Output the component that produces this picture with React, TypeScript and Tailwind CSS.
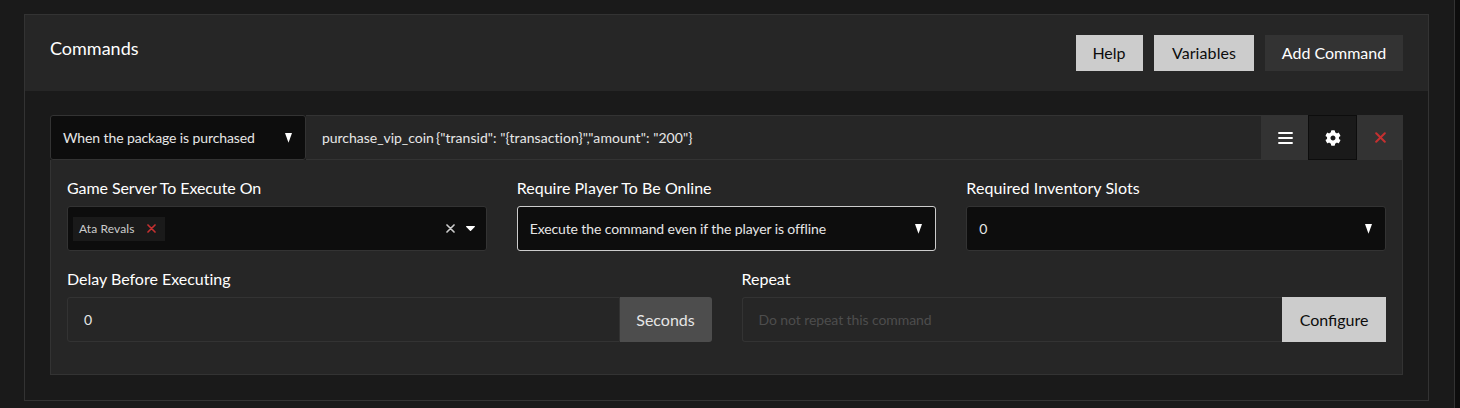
import type { ReactNode } from 'react';
import { FaCog } from 'react-icons/fa';

function SelectArrow() {
  return (
    <svg width="7" height="10" viewBox="0 0 7 10" className="shrink-0" fill="#fff">
      <path d="M0 0H7L3.5 9.8Z" />
    </svg>
  );
}

function BarsIcon() {
  return (
    <svg width="15" height="12" viewBox="0 0 15 12" fill="currentColor">
      <path d="M.3 0h14.4v2H.3zM.3 5h14.4v2H.3zM.3 10h14.4v2H.3z" />
    </svg>
  );
}

function CrossIcon({ size, className = '' }: { size: number; className?: string }) {
  return (
    <svg
      width={size}
      height={size}
      viewBox="0 0 11 11"
      className={`shrink-0 ${className}`}
      fill="none"
      stroke="currentColor"
      strokeWidth="2"
      strokeLinecap="round"
    >
      <path d="M1.2 1.2L9.8 9.8M9.8 1.2L1.2 9.8" />
    </svg>
  );
}

function Field({ label, className = '', children }: { label: string; className?: string; children: ReactNode }) {
  return (
    <div className="min-w-0">
      <div className={`h-[30px] text-base leading-[24px] text-white ${className}`}>{label}</div>
      {children}
    </div>
  );
}

function Select({ value, active = false }: { value: string; active?: boolean }) {
  return (
    <div
      className={`flex h-[45px] items-center justify-between rounded-[3px] border bg-[#0d0d0d] pr-[13px] pl-3 text-sm tracking-[-0.11px] text-[#e6e6e6] ${
        active ? 'border-[#cccccc]' : 'border-[#333333]'
      }`}
    >
      <span>{value}</span>
      <SelectArrow />
    </div>
  );
}

function HeaderButton({ label, className }: { label: string; className: string }) {
  return <button className={`flex h-9 items-center justify-center text-base ${className}`}>{label}</button>;
}

export default function App() {
  return (
    <div className="flex h-[408px] w-[1460px] overflow-hidden bg-[#0d0d0d] font-['Lato',sans-serif]">
      <main className="w-[1455px] border-r border-[#333333] bg-[#1a1a1a] pt-[14px] pl-6">
        <section className="h-[387px] w-[1405px] border border-[#333333]">
          <header className="flex h-[76px] items-start justify-between bg-[#262626] pr-[25px] pl-[25px]">
            <h2 className="pt-[19px] text-lg leading-7 text-white">Commands</h2>
            <div className="flex gap-[11px] pt-5">
              <HeaderButton label="Help" className="w-[67px] bg-[#cccccc] pr-px text-[#0d0d0d]" />
              <HeaderButton label="Variables" className="w-[100px] bg-[#cccccc] tracking-[0.1px] text-[#0d0d0d]" />
              <HeaderButton label="Add Command" className="w-[138px] bg-[#333333] text-white" />
            </div>
          </header>

          <div className="px-[25px] pt-6">
            <div className="flex h-[45px]">
              <div className="flex w-[256px] items-center justify-between rounded-[3px] border border-[#333333] bg-[#0d0d0d] pr-[13px] pl-3 text-sm tracking-[-0.1px] text-[#e6e6e6]">
                <span>When the package is purchased</span>
                <SelectArrow />
              </div>
              <div className="flex flex-1 items-center border-y border-[#333333] bg-[#262626] pl-4 text-sm text-[#e6e6e6]">
                <span className="whitespace-pre">
                  <span className="tracking-[-0.03px] [word-spacing:-1.5px]">purchase_vip_coin </span>
                  <span className="tracking-[0.06px]">{'{"transid": "{transaction}","amount": "200"}'}</span>
                </span>
              </div>
              <button className="flex w-[47px] items-center justify-center bg-[#333333] pl-px text-white">
                <BarsIcon />
              </button>
              <button className="flex w-[49px] items-center justify-center border border-[#0d0d0d] bg-[#1a1a1a] text-white">
                <FaCog size={16} />
              </button>
              <button className="flex w-[46px] items-center justify-center bg-[#333333] pl-px text-[#c53030]">
                <CrossIcon size={11} />
              </button>
            </div>

            <div className="h-[215px] border-x border-b border-[#333333] bg-[#262626] px-4 pt-4">
              <div className="grid grid-cols-3 gap-[30px]">
                <Field label="Game Server To Execute On" className="tracking-[-0.08px]">
                  <div className="flex h-[45px] items-center rounded-[3px] border border-[#333333] bg-[#0d0d0d] pr-[11px] pl-[5px]">
                    <div className="flex h-6 w-[92px] items-center justify-between bg-[#1a1a1a] pr-[9px] pl-1.5 text-xs tracking-[0.1px] text-[#cccccc]">
                      <span>Ata Revals</span>
                      <CrossIcon size={9} className="text-[#c53030]" />
                    </div>
                    <CrossIcon size={9} className="ml-auto text-[#cccccc]" />
                    <svg width="9" height="5" viewBox="0 0 9 5" className="ml-[11px] shrink-0" fill="#fff">
                      <path d="M.4 0H8.6Q9.2 .4 8.7 1L5 4.7Q4.5 5.2 4 4.7L.3 1Q-.2 .4 .4 0Z" />
                    </svg>
                  </div>
                </Field>
                <Field label="Require Player To Be Online" className="tracking-[0.02px]">
                  <Select value="Execute the command even if the player is offline" active />
                </Field>
                <Field label="Required Inventory Slots" className="tracking-[0.08px]">
                  <Select value="0" />
                </Field>
              </div>

              <div className="mt-4 grid grid-cols-2 gap-[30px]">
                <Field label="Delay Before Executing" className="tracking-[-0.01px]">
                  <div className="flex h-[45px]">
                    <div className="flex flex-1 items-center rounded-l-[3px] border border-[#333333] pl-4 text-sm text-[#e6e6e6]">
                      0
                    </div>
                    <div className="flex w-[92px] items-center justify-center rounded-r-[3px] bg-[#4d4d4d] text-base text-[#e6e6e6]">
                      Seconds
                    </div>
                  </div>
                </Field>
                <Field label="Repeat">
                  <div className="flex h-[45px]">
                    <div className="flex flex-1 items-center rounded-l-[3px] border border-r-0 border-[#333333] pl-4 text-sm tracking-[-0.08px] text-[#4d4d4d]">
                      Do not repeat this command
                    </div>
                    <button className="flex w-[104px] items-center justify-center bg-[#cccccc] text-base text-[#0d0d0d]">
                      Configure
                    </button>
                  </div>
                </Field>
              </div>
            </div>
          </div>
        </section>
      </main>
    </div>
  );
}
